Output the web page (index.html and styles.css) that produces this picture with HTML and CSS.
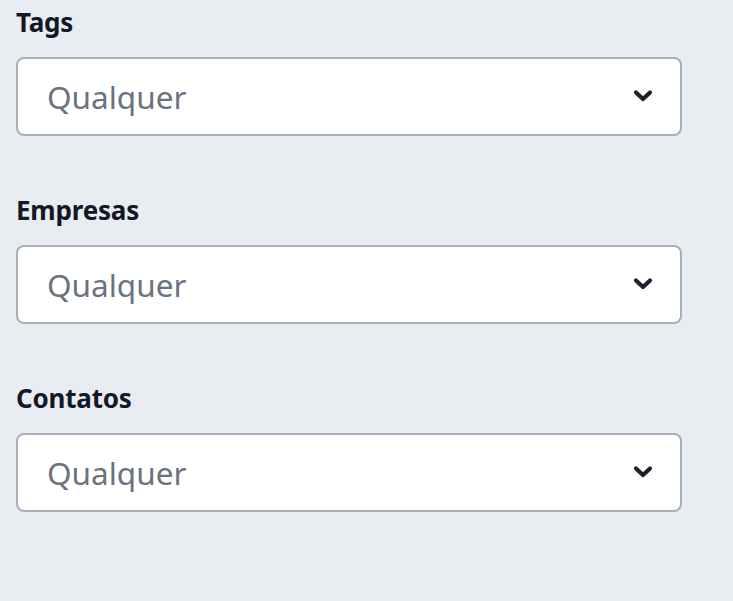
FILE: index.html
```html
<!DOCTYPE html>
<html lang="pt">
<head>
<meta charset="utf-8">
<title>Filtros</title>
<link rel="stylesheet" href="styles.css">
</head>
<body>
<div class="filters">
  <div class="field">
    <label class="label">Tags</label>
    <div class="select">
      <span class="value">Qualquer</span>
      <svg class="chev" viewBox="0 0 22 14" width="22" height="14"><polyline points="4,3.5 11,10 18,3.5" /></svg>
    </div>
  </div>
  <div class="field">
    <label class="label">Empresas</label>
    <div class="select">
      <span class="value">Qualquer</span>
      <svg class="chev" viewBox="0 0 22 14" width="22" height="14"><polyline points="4,3.5 11,10 18,3.5" /></svg>
    </div>
  </div>
  <div class="field">
    <label class="label">Contatos</label>
    <div class="select">
      <span class="value">Qualquer</span>
      <svg class="chev" viewBox="0 0 22 14" width="22" height="14"><polyline points="4,3.5 11,10 18,3.5" /></svg>
    </div>
  </div>
</div>
</body>
</html>
```
FILE: styles.css
```css
html, body {
  margin: 0;
  padding: 0;
  background: #e9ecf1;
  height: 100%;
}
body {
  font-family: "Noto Sans", "Open Sans", sans-serif;
}
.filters {
  padding: 6px 0 0 16px;
  width: 666px;
  display: flex;
  flex-direction: column;
  gap: 58px;
}
.field {
  display: flex;
  flex-direction: column;
}
.label {
  font-size: 26px;
  line-height: 32px;
  font-weight: 700;
  color: #111827;
  margin-bottom: 19px;
  letter-spacing: -0.2px;
}
.select {
  box-sizing: border-box;
  height: 79px;
  background: #ffffff;
  border: 2px solid #a7afba;
  border-radius: 8px;
  display: flex;
  align-items: center;
  justify-content: space-between;
  padding: 0 26px 0 29px;
}
.value {
  font-size: 31.5px;
  line-height: 40px;
  color: #6b7280;
}
.chev {
  display: block;
  margin-top: -2px;
}
.chev polyline {
  fill: none;
  stroke: #1a2230;
  stroke-width: 4.2;
  stroke-linecap: round;
  stroke-linejoin: round;
}
```
